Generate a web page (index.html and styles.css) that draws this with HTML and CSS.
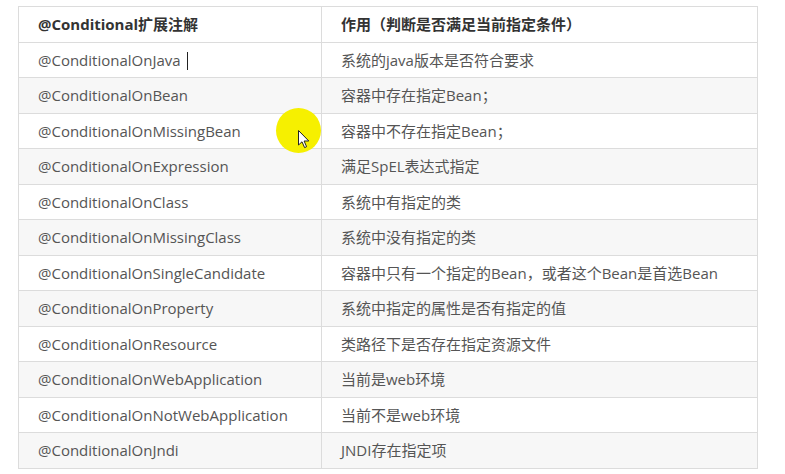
FILE: index.html
```html
<!DOCTYPE html>
<html lang="zh">
<head>
<meta charset="utf-8">
<link rel="stylesheet" href="styles.css">
</head>
<body>
<div class="page">
  <table class="cond">
    <thead>
      <tr><th class="c1">@Conditional扩展注解</th><th>作用（判断是否满足当前指定条件）</th></tr>
    </thead>
    <tbody>
      <tr><td class="c1">@ConditionalOnJava<span class="caret"></span></td><td>系统的java版本是否符合要求</td></tr>
      <tr><td class="c1">@ConditionalOnBean</td><td>容器中存在指定Bean；</td></tr>
      <tr><td class="c1">@ConditionalOnMissingBean</td><td>容器中不存在指定Bean；</td></tr>
      <tr><td class="c1">@ConditionalOnExpression</td><td>满足SpEL表达式指定</td></tr>
      <tr><td class="c1">@ConditionalOnClass</td><td>系统中有指定的类</td></tr>
      <tr><td class="c1">@ConditionalOnMissingClass</td><td>系统中没有指定的类</td></tr>
      <tr><td class="c1">@ConditionalOnSingleCandidate</td><td>容器中只有一个指定的Bean，或者这个Bean是首选Bean</td></tr>
      <tr><td class="c1">@ConditionalOnProperty</td><td>系统中指定的属性是否有指定的值</td></tr>
      <tr><td class="c1">@ConditionalOnResource</td><td>类路径下是否存在指定资源文件</td></tr>
      <tr><td class="c1">@ConditionalOnWebApplication</td><td>当前是web环境</td></tr>
      <tr><td class="c1">@ConditionalOnNotWebApplication</td><td>当前不是web环境</td></tr>
      <tr><td class="c1">@ConditionalOnJndi</td><td>JNDI存在指定项</td></tr>
    </tbody>
  </table>
  <div class="highlight"></div>
  <svg class="pointer" width="12" height="19" viewBox="0 0 12 19" xmlns="http://www.w3.org/2000/svg">
    <path d="M0.5 0.5 L0.5 15 L4 11.8 L6.6 17.6 L8.6 16.7 L6.1 11 L10.8 11 Z" fill="#fff" stroke="#222" stroke-width="1" stroke-linejoin="round"/>
  </svg>
</div>
</body>
</html>
```

FILE: styles.css
```css
html, body {
  margin: 0;
  padding: 0;
  background: #fff;
}

.page {
  position: relative;
  padding: 6px 0 0 18px;
  width: 785px;
  height: 474px;
  box-sizing: border-box;
  font-family: "Open Sans", "Noto Sans CJK SC", sans-serif;
}

.cond {
  border-collapse: collapse;
  width: 740px;
  font-size: 15px;
  color: #555;
}

.cond th,
.cond td {
  border: 1px solid #dcdcdc;
  padding: 0 0 0 19px;
  height: 35.5px;
  box-sizing: border-box;
  text-align: left;
  vertical-align: middle;
  white-space: nowrap;
  line-height: 20px;
}

.cond th {
  font-weight: 700;
  color: #333;
  background: #fff;
}

.cond .c1 {
  width: 303px;
}

.cond tbody tr:nth-child(even) td {
  background: #f7f7f7;
}

.cond tbody tr:nth-child(odd) td {
  background: #fff;
}

.caret {
  display: inline-block;
  width: 1px;
  height: 18px;
  background: #222;
  margin-left: 6px;
  vertical-align: -4px;
}

.highlight {
  position: absolute;
  left: 276px;
  top: 108px;
  width: 45px;
  height: 45px;
  border-radius: 50%;
  background: #f6f000;
}

.pointer {
  position: absolute;
  left: 298px;
  top: 130px;
}
```
